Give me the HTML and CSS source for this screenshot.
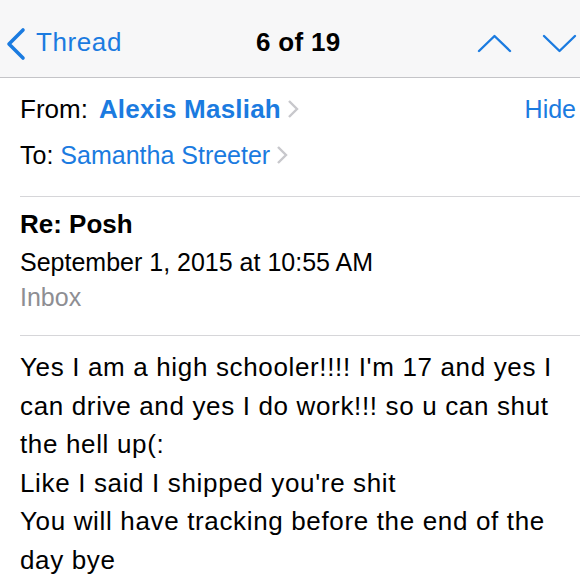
FILE: index.html
```html
<!DOCTYPE html>
<html>
<head>
<meta charset="utf-8">
<link rel="stylesheet" href="styles.css">
</head>
<body>
<div class="screen">
  <header class="navbar">
    <div class="back">
      <svg class="back-chev" width="22" height="34" viewBox="0 0 22 34"><polyline points="18,3 4,17 18,31" fill="none" stroke="#1b7be0" stroke-width="3.6" stroke-linecap="round" stroke-linejoin="round"/></svg>
      <span class="back-label">Thread</span>
    </div>
    <div class="title">6 of 19</div>
    <div class="arrows">
      <svg width="36" height="20" viewBox="0 0 36 20"><polyline points="2,17 17.5,2 33,17" fill="none" stroke="#1b7be0" stroke-width="2.4" stroke-linecap="round" stroke-linejoin="round"/></svg>
      <svg width="36" height="20" viewBox="0 0 36 20"><polyline points="2,2 17.5,17 33,2" fill="none" stroke="#1b7be0" stroke-width="2.4" stroke-linecap="round" stroke-linejoin="round"/></svg>
    </div>
  </header>

  <section class="addresses">
    <div class="row from">
      <span class="label">From:</span>
      <span class="name bold">Alexis Masliah</span>
      <svg class="disc" width="14" height="20" viewBox="0 0 14 20"><polyline points="3,2 11,10 3,18" fill="none" stroke="#c8c8cc" stroke-width="2.4"/></svg>
      <span class="hide">Hide</span>
    </div>
    <div class="row to">
      <span class="label">To:</span>
      <span class="name">Samantha Streeter</span>
      <svg class="disc" width="14" height="20" viewBox="0 0 14 20"><polyline points="3,2 11,10 3,18" fill="none" stroke="#c8c8cc" stroke-width="2.4"/></svg>
    </div>
  </section>

  <section class="meta">
    <div class="subject">Re: Posh</div>
    <div class="date">September 1, 2015 at 10:55 AM</div>
    <div class="mailbox">Inbox</div>
  </section>

  <section class="message">
    <div>Yes I am a high schooler!!!! I'm 17 and yes I</div>
    <div>can drive and yes I do work!!! so u can shut</div>
    <div>the hell up(:</div>
    <div>Like I said I shipped you're shit</div>
    <div>You will have tracking before the end of the</div>
    <div>day bye</div>
  </section>
</div>
</body>
</html>
```

FILE: styles.css
```css
html, body {
  margin: 0;
  padding: 0;
  background: #ffffff;
}

body {
  font-family: "Liberation Sans", Arial, sans-serif;
  color: #000000;
  width: 580px;
  height: 580px;
  overflow: hidden;
}

.screen {
  width: 580px;
}

.navbar {
  height: 78px;
  box-sizing: border-box;
  padding-top: 8px;
  background: #f7f7f8;
  border-bottom: 1px solid #c4c4c8;
  display: flex;
  align-items: center;
}

.back {
  display: flex;
  align-items: center;
  margin-left: 5px;
  width: 251px;
}

.back-chev {
  display: block;
  margin-top: 2px;
}

.back-label {
  color: #1b7be0;
  font-size: 26px;
  letter-spacing: 0.6px;
  margin-left: 9px;
}

.title {
  font-size: 26px;
  font-weight: bold;
  letter-spacing: 0.3px;
  width: 220px;
}

.arrows {
  display: flex;
  align-items: center;
  gap: 29px;
  margin-left: 1px;
  margin-top: 2px;
}

.arrows svg {
  display: block;
}

.addresses {
  margin-left: 20px;
  padding: 11px 4px 21px 0;
  border-bottom: 1px solid #d6d6d9;
}

.row {
  display: flex;
  align-items: center;
  font-size: 25px;
  height: 40px;
}

.row.from {
  font-size: 26px;
}

.row.from .label {
  margin-right: 11px;
}

.row.from .name {
  letter-spacing: 0.2px;
}

.row.from .hide {
  font-size: 25px;
}

.row.to {
  margin-top: 6px;
}

.label {
  margin-right: 7px;
}

.name {
  color: #1b7be0;
}

.bold {
  font-weight: bold;
}

.disc {
  display: block;
  margin-left: 5px;
}

.hide {
  margin-left: auto;
  color: #1b7be0;
}

.meta {
  margin-left: 20px;
  padding: 8px 0 22px 0;
  border-bottom: 1px solid #d6d6d9;
  font-size: 25px;
}

.subject {
  font-size: 26px;
  font-weight: bold;
  line-height: 38px;
}

.date {
  line-height: 38px;
}

.mailbox {
  color: #8e8e93;
  line-height: 32px;
}

.message {
  padding: 12px 0 0 20px;
  font-size: 26px;
  line-height: 38.6px;
  letter-spacing: 0.65px;
  white-space: nowrap;
}
```
